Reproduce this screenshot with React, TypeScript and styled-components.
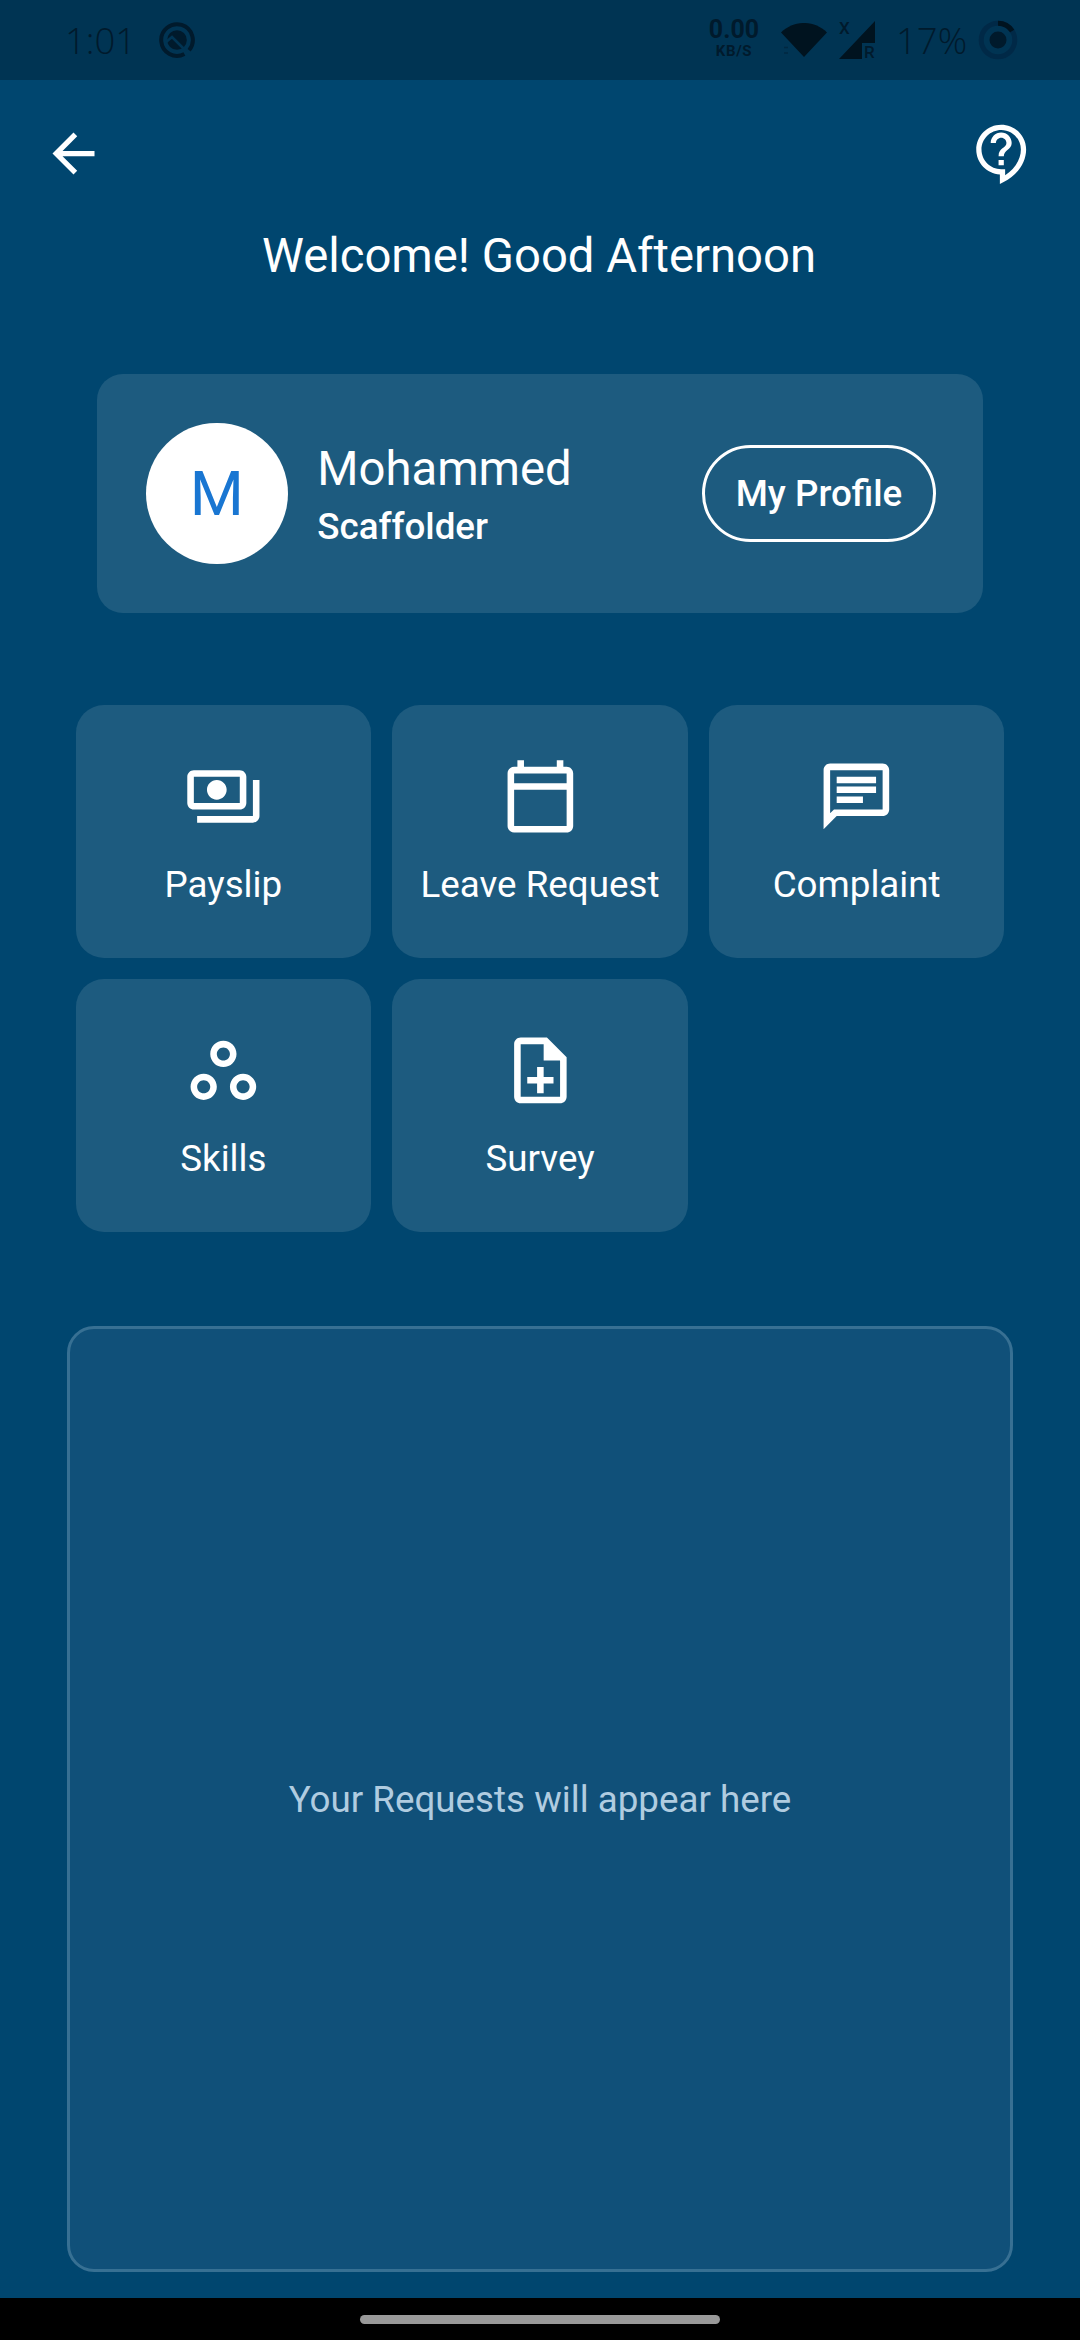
import React from "react";
import styled, { createGlobalStyle } from "styled-components";

const GlobalStyle = createGlobalStyle`
  * { box-sizing: border-box; }
  body { margin: 0; background: #00466f; }
  button { font: inherit; color: inherit; background: none; border: 0; padding: 0; }
`;

const Screen = styled.div`
  width: 1080px;
  height: 2340px;
  display: flex;
  flex-direction: column;
  background: #00466f;
  color: #fff;
  font-family: Roboto, "Noto Sans", sans-serif;
  overflow: hidden;
`;

const StatusBar = styled.header`
  height: 80px;
  flex: none;
  display: flex;
  align-items: center;
  justify-content: space-between;
  padding: 0 62px 0 65px;
  background: #003453;
  color: #001a2c;
`;

const StatusGroup = styled.div`
  display: flex;
  align-items: center;
`;

const StatusText = styled.span<{ $width: number; $spacing?: number }>`
  width: ${(p) => p.$width}px;
  font-family: "Open Sans", sans-serif;
  font-weight: 300;
  font-size: 36.5px;
  line-height: 50px;
  letter-spacing: ${(p) => p.$spacing ?? 0}px;
  white-space: nowrap;
`;

const NetSpeed = styled.div`
  display: flex;
  flex-direction: column;
  align-items: center;
  gap: 2.5px;
  width: 50px;
  margin-right: 22px;
  padding-bottom: 3px;
  font-weight: 700;
`;

const SpeedValue = styled.span`
  font-size: 25px;
  line-height: 22px;
`;

const SpeedUnit = styled.span`
  font-size: 15px;
  line-height: 14px;
  letter-spacing: 0.6px;
`;

const StatusIcon = styled.svg<{ $w: number; $h: number }>`
  display: block;
  flex: none;
  width: ${(p) => p.$w}px;
  height: ${(p) => p.$h}px;
`;

const AppBar = styled.nav`
  height: 147px;
  flex: none;
  display: flex;
  align-items: center;
  justify-content: space-between;
  padding: 0 46px 0 42px;
`;

const IconButton = styled.button`
  display: flex;
`;

const Glyph = styled.svg<{ $size: number }>`
  display: block;
  width: ${(p) => p.$size}px;
  height: ${(p) => p.$size}px;
  fill: currentColor;
`;

const Greeting = styled.h1`
  margin: 1px 0 0;
  padding-right: 2px;
  font-size: 47.25px;
  font-weight: 400;
  line-height: 56px;
  text-align: center;
`;

const ProfileCard = styled.section`
  display: flex;
  align-items: center;
  height: 239px;
  flex: none;
  margin: 90px 97px 0;
  padding: 0 47px 0 49px;
  border-radius: 26px;
  background: #1d5b7f;
`;

const Avatar = styled.div`
  display: flex;
  align-items: center;
  justify-content: center;
  width: 141.75px;
  height: 141.75px;
  border-radius: 50%;
  background: #fff;
  color: #1976d2;
  font-size: 62px;
`;

const Identity = styled.div`
  display: flex;
  flex-direction: column;
  gap: 8px;
  flex: 1;
  margin-left: 29.5px;
  padding-top: 1px;
`;

const Name = styled.div`
  font-size: 47.25px;
  line-height: 56px;
`;

const Role = styled.div`
  font-size: 36.75px;
  font-weight: 500;
  line-height: 43px;
`;

const ProfileButton = styled.button`
  width: 234px;
  height: 97px;
  border: 3px solid #fff;
  border-radius: 49px;
  font-size: 36.75px;
  font-weight: 500;
  line-height: 43px;
  text-align: center;
  white-space: nowrap;
`;

const TileGrid = styled.section`
  display: grid;
  grid-template-columns: repeat(3, 1fr);
  grid-auto-rows: 253px;
  gap: 21px;
  margin: 92px 75.5px 0;
`;

const Tile = styled.button`
  display: flex;
  flex-direction: column;
  align-items: center;
  justify-content: center;
  gap: 27px;
  border-radius: 28px;
  background: #1d5b7f;
`;

const TileLabel = styled.span`
  font-size: 36.75px;
  line-height: 43px;
  white-space: nowrap;
`;

const Requests = styled.section`
  display: flex;
  align-items: center;
  justify-content: center;
  height: 946px;
  flex: none;
  margin: 94px 67px 0;
  border: 3px solid #377093;
  border-radius: 27px;
  background: #105079;
  color: #b0cce0;
  font-size: 36.75px;
  line-height: 43px;
`;

const GestureBar = styled.footer`
  display: flex;
  align-items: center;
  justify-content: center;
  height: 42px;
  margin-top: auto;
  flex: none;
  background: #000;
`;

const GestureHandle = styled.div`
  width: 360px;
  height: 9px;
  border-radius: 5px;
  background: #999;
`;

const SignalBox = styled.div`
  position: relative;
  width: 36px;
  height: 38px;
  margin: 0 21px 0 12px;
`;

const SignalLabel = styled.span<{ $x: number; $y: number }>`
  position: absolute;
  left: ${(p) => p.$x}px;
  top: ${(p) => p.$y}px;
  font-size: 17px;
  line-height: 17px;
  font-weight: 500;
`;

const paths = {
  back: "M20 11H7.83l5.59-5.59L12 4l-8 8 8 8 1.41-1.41L7.83 13H20v-2z",
  support:
    "M11 23.59v-3.6c-5.01-.26-9-4.42-9-9.49C2 5.26 6.26 1 11.5 1S21 5.26 21 10.5c0 4.95-3.44 9.93-8.57 12.4l-1.43.69zM11.5 3C7.36 3 4 6.36 4 10.5S7.36 18 11.5 18H13v2.3c3.64-2.3 6-6.08 6-9.8C19 6.36 15.64 3 11.5 3zm-1 11.5h2v2h-2v-2zm2-1.5h-2c0-3.25 3-3 3-5 0-1.1-.9-2-2-2s-2 .9-2 2h-2c0-2.21 1.79-4 4-4s4 1.79 4 4c0 2.5-3 2.75-3 5z",
  payments:
    "M19 14V6c0-1.1-.9-2-2-2H3c-1.1 0-2 .9-2 2v8c0 1.1.9 2 2 2h14c1.1 0 2-.9 2-2zm-2 0H3V6h14v8zm-7-7c-1.66 0-3 1.34-3 3s1.34 3 3 3 3-1.34 3-3-1.34-3-3-3zm13 0v11c0 1.1-.9 2-2 2H4v-2h17V7h2z",
  calendar:
    "M20 3h-1V1h-2v2H7V1H5v2H4c-1.1 0-2 .9-2 2v16c0 1.1.9 2 2 2h16c1.1 0 2-.9 2-2V5c0-1.1-.9-2-2-2zm0 18H4V10h16v11zm0-13H4V5h16v3z",
  chat:
    "M4 4h16v12H5.17L4 17.17V4m0-2c-1.1 0-1.99.9-1.99 2L2 22l4-4h14c1.1 0 2-.9 2-2V4c0-1.1-.9-2-2-2H4zm2 10h8v2H6v-2zm0-3h12v2H6V9zm0-3h12v2H6V6z",
  workspaces:
    "M6 13c-2.2 0-4 1.8-4 4s1.8 4 4 4 4-1.8 4-4-1.8-4-4-4zm0 6c-1.1 0-2-.9-2-2s.9-2 2-2 2 .9 2 2-.9 2-2 2zm6-16C9.8 3 8 4.8 8 7s1.8 4 4 4 4-1.8 4-4-1.8-4-4-4zm0 6c-1.1 0-2-.9-2-2s.9-2 2-2 2 .9 2 2-.9 2-2 2zm6 4c-2.2 0-4 1.8-4 4s1.8 4 4 4 4-1.8 4-4-1.8-4-4-4zm0 6c-1.1 0-2-.9-2-2s.9-2 2-2 2 .9 2 2-.9 2-2 2z",
  noteAdd:
    "M13 11h-2v3H8v2h3v3h2v-3h3v-2h-3zm1-9H6c-1.1 0-2 .9-2 2v16c0 1.1.89 2 1.99 2H18c1.1 0 2-.9 2-2V8l-6-6zm4 18H6V4h7v5h5v11z",
};

type IconName = keyof typeof paths;

const Icon = ({ name, size }: { name: IconName; size: number }) => (
  <Glyph $size={size} viewBox="0 0 24 24" aria-hidden="true">
    <path d={paths[name]} />
  </Glyph>
);

const tiles: { icon: IconName; label: string }[] = [
  { icon: "payments", label: "Payslip" },
  { icon: "calendar", label: "Leave Request" },
  { icon: "chat", label: "Complaint" },
  { icon: "workspaces", label: "Skills" },
  { icon: "noteAdd", label: "Survey" },
];

const NotificationIcon = () => (
  <StatusIcon $w={36} $h={36} viewBox="0 0 36 36">
    <path d="M25.4 32A15.8 15.8 0 1 1 30.1 28.2" fill="none" stroke="currentColor" strokeWidth="4" />
    <circle cx="18" cy="18" r="9.8" fill="currentColor" />
    <path d="M7 20L13 15L27 29" fill="none" stroke="#003453" strokeWidth="2.6" />
  </StatusIcon>
);

const WifiIcon = () => (
  <StatusIcon $w={46} $h={34} viewBox="0 0 46 34">
    <path d="M0 9.5C13-3.2 33-3.2 46 9.5L23 34Z" fill="#00131f" />
    <path d="M3 24.5H7M3 30H7" stroke="currentColor" strokeWidth="1.5" opacity="0.45" />
  </StatusIcon>
);

const BatteryIcon = () => (
  <StatusIcon $w={40} $h={40} viewBox="0 0 40 40">
    <circle cx="20" cy="20" r="16.8" fill="none" stroke="#002947" strokeWidth="5" />
    <path d="M20 3.2A16.8 16.8 0 0 1 34.2 11" fill="none" stroke="#00131f" strokeWidth="5" />
    <circle cx="20" cy="20" r="8.5" fill="currentColor" />
  </StatusIcon>
);

export default function App() {
  return (
    <>
      <GlobalStyle />
      <Screen>
        <StatusBar>
          <StatusGroup>
            <StatusText $width={94}>1:01</StatusText>
            <NotificationIcon />
          </StatusGroup>
          <StatusGroup>
            <NetSpeed>
              <SpeedValue>0.00</SpeedValue>
              <SpeedUnit>KB/S</SpeedUnit>
            </NetSpeed>
            <WifiIcon />
            <SignalBox>
              <StatusIcon $w={36} $h={38} viewBox="0 0 36 38">
                <path d="M36 0V22H23V38H0Z" fill="#00131f" />
              </StatusIcon>
              <SignalLabel $x={0} $y={-1}>X</SignalLabel>
              <SignalLabel $x={25} $y={23}>R</SignalLabel>
            </SignalBox>
            <StatusText $width={82}>17%</StatusText>
            <BatteryIcon />
          </StatusGroup>
        </StatusBar>

        <AppBar>
          <IconButton aria-label="Back">
            <Icon name="back" size={63} />
          </IconButton>
          <IconButton aria-label="Support">
            <Icon name="support" size={63} />
          </IconButton>
        </AppBar>

        <Greeting>Welcome! Good Afternoon</Greeting>

        <ProfileCard>
          <Avatar>M</Avatar>
          <Identity>
            <Name>Mohammed</Name>
            <Role>Scaffolder</Role>
          </Identity>
          <ProfileButton>My Profile</ProfileButton>
        </ProfileCard>

        <TileGrid>
          {tiles.map((tile) => (
            <Tile key={tile.label}>
              <Icon name={tile.icon} size={78.75} />
              <TileLabel>{tile.label}</TileLabel>
            </Tile>
          ))}
        </TileGrid>

        <Requests>Your Requests will appear here</Requests>

        <GestureBar>
          <GestureHandle />
        </GestureBar>
      </Screen>
    </>
  );
}
